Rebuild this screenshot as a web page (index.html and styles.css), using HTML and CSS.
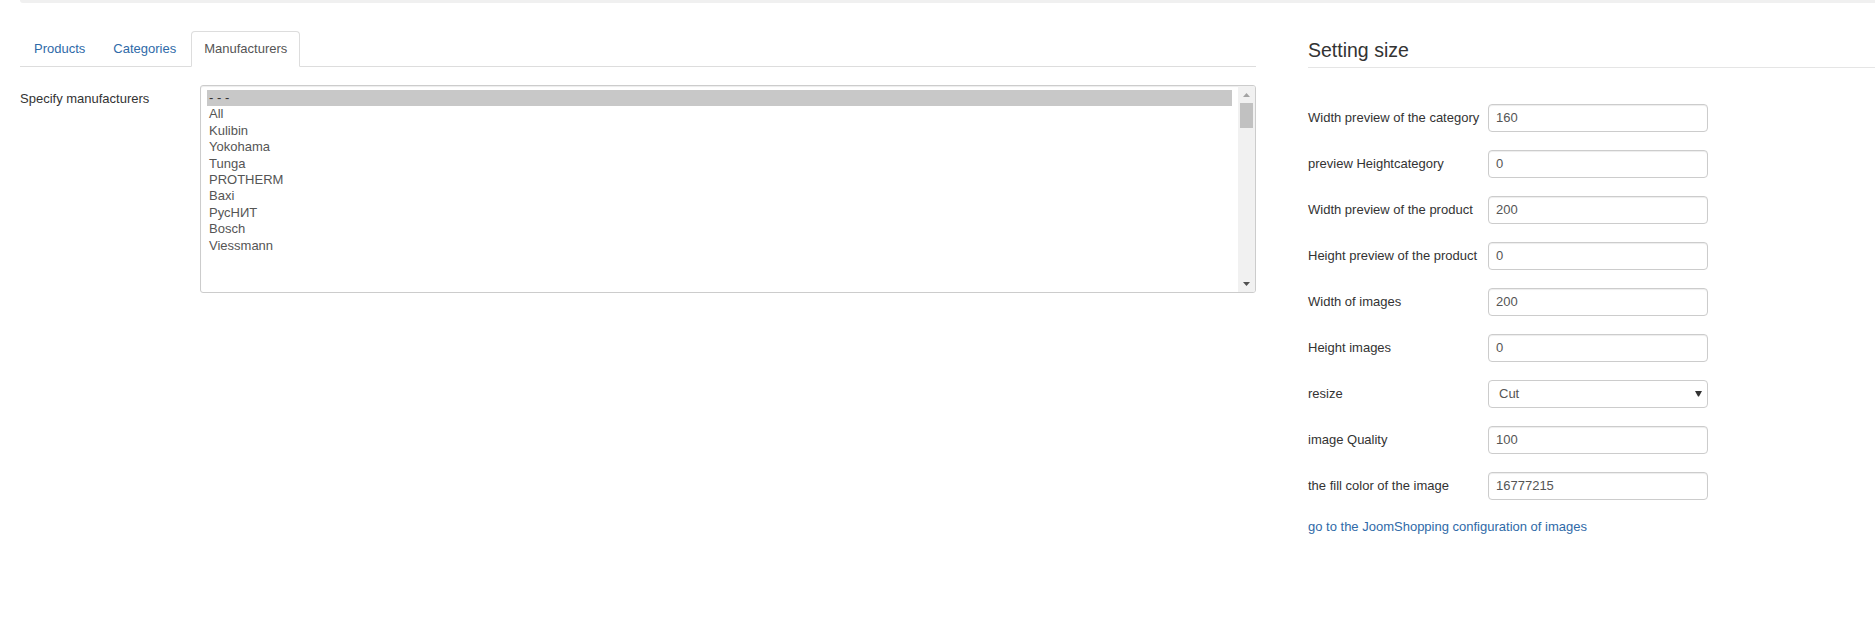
FILE: index.html
```html
<!DOCTYPE html>
<html lang="en">
<head>
    <meta charset="UTF-8">
    <title>Manufacturers / Setting size</title>
    <link rel="stylesheet" href="styles.css">
</head>
<body>
    <div class="subhead"></div>
    <div class="page">
        <div class="main-col">
            <ul class="nav-tabs">
                <li><a href="#">Products</a></li>
                <li><a href="#">Categories</a></li>
                <li class="active"><a href="#">Manufacturers</a></li>
            </ul>
            <div class="control-group">
                <label class="control-label">Specify manufacturers</label>
                <div class="controls">
                    <div class="listbox">
                        <div class="options">
                            <div class="option selected">- - -</div>
                            <div class="option">All</div>
                            <div class="option">Kulibin</div>
                            <div class="option">Yokohama</div>
                            <div class="option">Tunga</div>
                            <div class="option">PROTHERM</div>
                            <div class="option">Baxi</div>
                            <div class="option">РусНИТ</div>
                            <div class="option">Bosch</div>
                            <div class="option">Viessmann</div>
                        </div>
                        <div class="scrollbar">
                            <div class="scroll-btn">
                                <svg width="7" height="4" viewBox="0 0 7 4"><path d="M0 4h7L3.5 0z" fill="#a3a3a3"/></svg>
                            </div>
                            <div class="scroll-track"><div class="scroll-thumb"></div></div>
                            <div class="scroll-btn">
                                <svg width="7" height="4" viewBox="0 0 7 4"><path d="M0 0h7L3.5 4z" fill="#505050"/></svg>
                            </div>
                        </div>
                    </div>
                </div>
            </div>
        </div>

        <div class="side-col">
            <div class="legend">Setting size</div>
            <div class="form-row">
                <label class="form-label">Width preview of the category</label>
                <div class="input">160</div>
            </div>
            <div class="form-row">
                <label class="form-label">preview Heightcategory</label>
                <div class="input">0</div>
            </div>
            <div class="form-row">
                <label class="form-label">Width preview of the product</label>
                <div class="input">200</div>
            </div>
            <div class="form-row">
                <label class="form-label">Height preview of the product</label>
                <div class="input">0</div>
            </div>
            <div class="form-row">
                <label class="form-label">Width of images</label>
                <div class="input">200</div>
            </div>
            <div class="form-row">
                <label class="form-label">Height images</label>
                <div class="input">0</div>
            </div>
            <div class="form-row">
                <label class="form-label">resize</label>
                <div class="input select">
                    <span>Cut</span>
                    <svg width="7" height="6" viewBox="0 0 7 6"><path d="M0 0h7L4 5.5H3z" fill="#333"/></svg>
                </div>
            </div>
            <div class="form-row">
                <label class="form-label">image Quality</label>
                <div class="input">100</div>
            </div>
            <div class="form-row">
                <label class="form-label">the fill color of the image</label>
                <div class="input">16777215</div>
            </div>
            <a class="config-link" href="#">go to the JoomShopping configuration of images</a>
        </div>
    </div>
</body>
</html>
```

FILE: styles.css
```css
body {
    margin: 0;
    background: #fff;
    color: #333;
    font-family: "Liberation Sans", Arial, sans-serif;
    font-size: 13px;
    line-height: 18px;
}

a {
    color: #2f6aa8;
    text-decoration: none;
}

.subhead {
    height: 3px;
    margin-left: 20px;
    background: #f0f0f0;
    border-radius: 0 0 0 5px;
}

.page {
    display: grid;
    grid-template-columns: 1236px 1fr;
    column-gap: 52px;
    padding-left: 20px;
}

/* tabs */

.nav-tabs {
    display: flex;
    list-style: none;
    margin: 28px 0 18px 0;
    padding: 0 0 0 1px;
    border-bottom: 1px solid #ddd;
}

.nav-tabs li {
    margin-right: 2px;
    margin-bottom: -1px;
}

.nav-tabs a {
    display: block;
    padding: 8px 12px;
    border: 1px solid transparent;
    border-radius: 4px 4px 0 0;
}

.nav-tabs .active a {
    color: #555;
    background: #fff;
    border-color: #ddd #ddd transparent;
}

/* manufacturers list */

.control-group {
    display: flex;
}

.control-label {
    width: 180px;
    padding-top: 5px;
}

.controls {
    flex: 1;
}

.listbox {
    display: flex;
    height: 206px;
    border: 1px solid #ccc;
    border-radius: 3px;
    box-shadow: inset 0 1px 1px rgba(0,0,0,0.075);
    overflow: hidden;
}

.options {
    flex: 1;
    padding: 4px 6px;
    color: #555;
}

.option {
    padding: 0 2px;
    line-height: 16.4px;
    height: 16.4px;
}

.option.selected {
    background: #c8c8c8;
    color: #333;
}

.scrollbar {
    width: 17px;
    display: flex;
    flex-direction: column;
    background: #f1f1f1;
}

.scroll-btn {
    height: 17px;
    display: flex;
    justify-content: center;
    align-items: center;
}

.scroll-track {
    flex: 1;
    padding: 0 2px;
}

.scroll-thumb {
    height: 25px;
    background: #c1c1c1;
}

/* size settings */

.legend {
    margin: 32px 0 36px 0;
    padding-bottom: 2px;
    font-size: 19.5px;
    line-height: 30px;
    border-bottom: 1px solid #e5e5e5;
}

.form-row {
    display: flex;
    margin-bottom: 18px;
}

.form-label {
    width: 180px;
    padding-top: 5px;
    white-space: nowrap;
}

.input {
    box-sizing: border-box;
    width: 220px;
    height: 28px;
    padding: 4px 7px;
    border: 1px solid #ccc;
    border-radius: 4px;
    box-shadow: inset 0 1px 1px rgba(0,0,0,0.075);
    color: #555;
}

.select {
    display: flex;
    justify-content: space-between;
    align-items: center;
    padding: 0 5px 0 10px;
    box-shadow: none;
}

.select svg {
    margin-top: -1px;
}

.config-link {
    display: block;
}
```
